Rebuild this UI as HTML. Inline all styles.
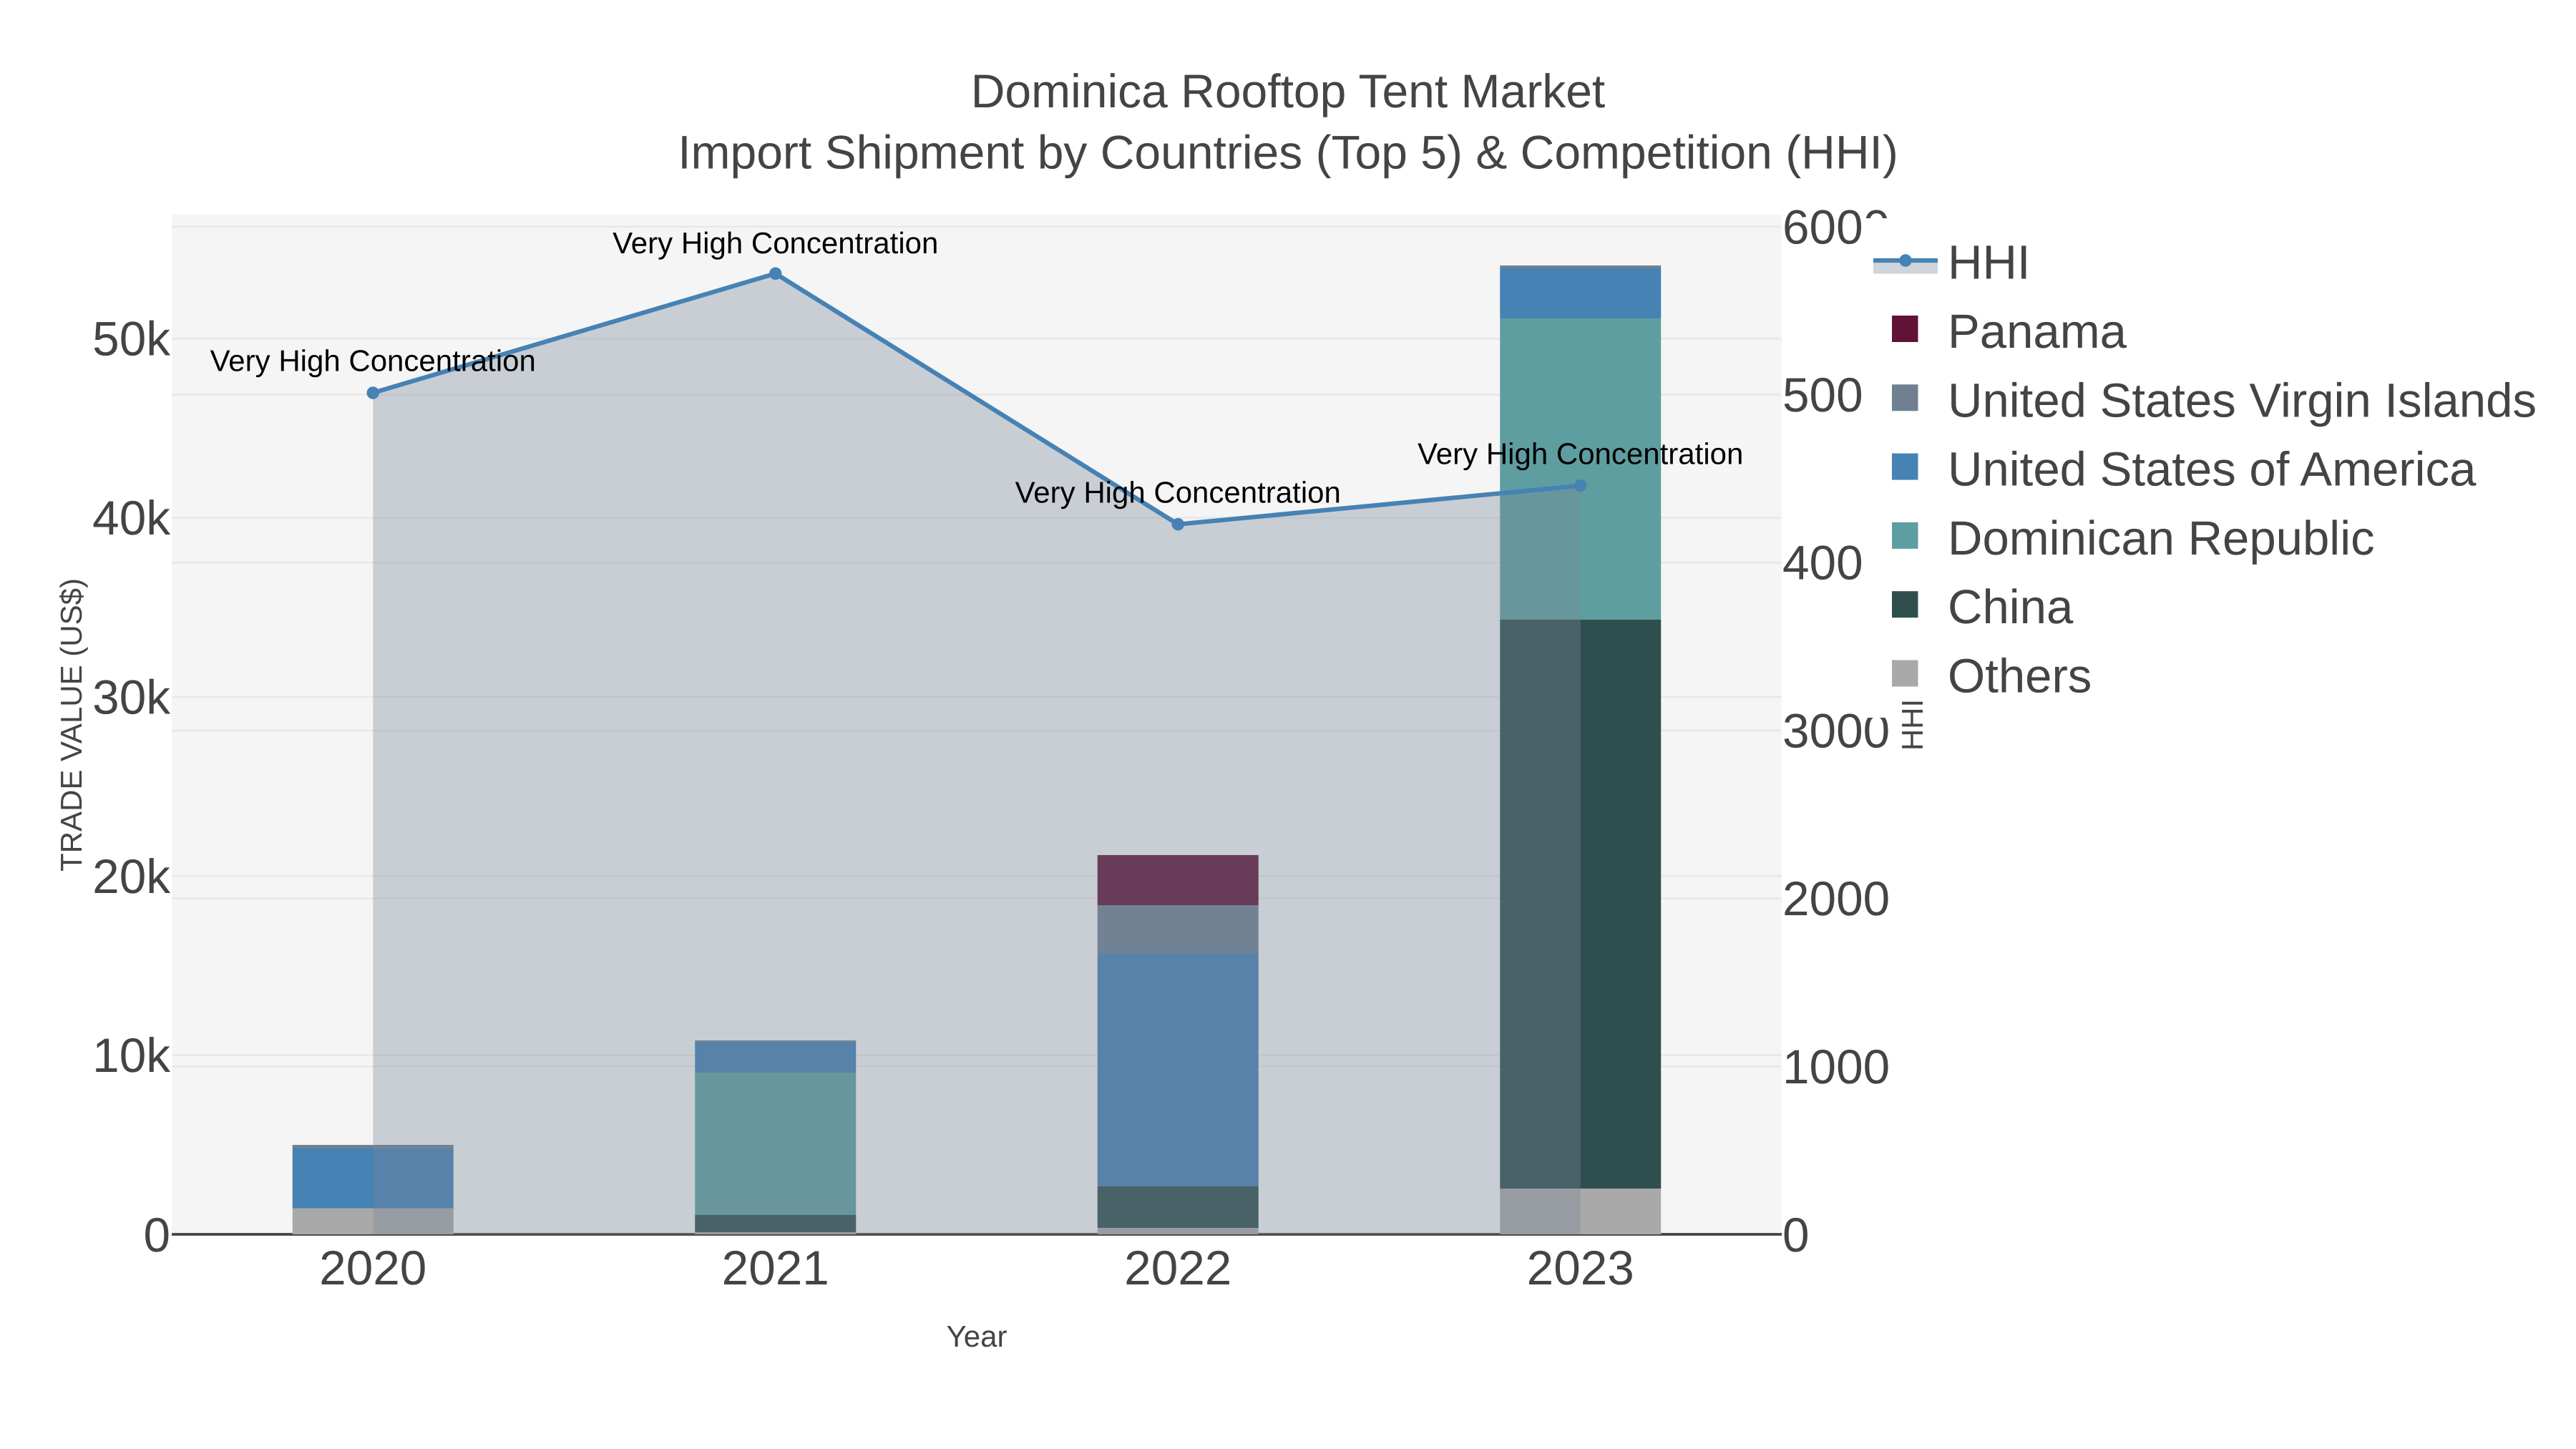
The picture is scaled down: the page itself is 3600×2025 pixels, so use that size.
<!DOCTYPE html>
<html>
<head>
<meta charset="utf-8">
<style>
html,body{margin:0;padding:0;background:#fff;width:3600px;height:2025px;overflow:hidden}
svg{display:block}
text{font-family:"Liberation Sans",Arial,sans-serif;text-rendering:geometricPrecision;fill:#444}
.t{font-size:67.5px}
.l{font-size:67.1px}
.a{font-size:42px}
.n{font-size:42px;fill:#000;text-anchor:middle}
.m{text-anchor:middle}
.e{text-anchor:end}
</style>
</head>
<body>
<svg width="3600" height="2025" viewBox="0 0 3600 2025" xmlns="http://www.w3.org/2000/svg">
<rect width="3600" height="2025" fill="#fff"/>
<rect x="240" y="300" width="2250" height="1425" fill="#f5f5f5"/>
<g stroke="#e8e8e8" stroke-width="2.5">
<path d="M240 1474.7H2490M240 1224.3H2490M240 974H2490M240 723.6H2490M240 473.2H2490"/>
<path d="M240 1490.3H2490M240 1255.6H2490M240 1021H2490M240 786.2H2490M240 551.6H2490M240 316.9H2490"/>
</g>
<path d="M240 1725H2490" stroke="#444" stroke-width="3.75"/>

<!-- 2020 -->
<rect x="408.75" y="1688.7" width="225" height="36.3" fill="#a9a9a9"/>
<rect x="408.75" y="1605" width="225" height="83.7" fill="#4682b4"/>
<rect x="408.75" y="1600" width="225" height="5" fill="#708090"/>
<!-- 2021 -->
<rect x="971.25" y="1722" width="225" height="3" fill="#a9a9a9"/>
<rect x="971.25" y="1698" width="225" height="24" fill="#2f4f4f"/>
<rect x="971.25" y="1499" width="225" height="199" fill="#5f9ea0"/>
<rect x="971.25" y="1456" width="225" height="43" fill="#4682b4"/>
<rect x="971.25" y="1454" width="225" height="2" fill="#708090"/>
<!-- 2022 -->
<rect x="1533.75" y="1716" width="225" height="9" fill="#a9a9a9"/>
<rect x="1533.75" y="1657.6" width="225" height="58.4" fill="#2f4f4f"/>
<rect x="1533.75" y="1332" width="225" height="325.6" fill="#4682b4"/>
<rect x="1533.75" y="1265" width="225" height="67" fill="#708090"/>
<rect x="1533.75" y="1195" width="225" height="70" fill="#601336"/>
<!-- 2023 -->
<rect x="2096.25" y="1661" width="225" height="64" fill="#a9a9a9"/>
<rect x="2096.25" y="866" width="225" height="795" fill="#2f4f4f"/>
<rect x="2096.25" y="445" width="225" height="421" fill="#5f9ea0"/>
<rect x="2096.25" y="375" width="225" height="70" fill="#4682b4"/>
<rect x="2096.25" y="371" width="225" height="4" fill="#708090"/>

<!-- HHI -->
<path d="M521.25 549L1083.75 382.3L1646.25 732.7L2208.75 678.7V1725H521.25Z" fill="#778899" fill-opacity="0.35"/>
<path d="M521.25 549L1083.75 382.3L1646.25 732.7L2208.75 678.7" fill="none" stroke="#4682b4" stroke-width="6.25" stroke-linejoin="round"/>
<g fill="#4682b4">
<circle cx="521.25" cy="549" r="8.75"/>
<circle cx="1083.75" cy="382.3" r="8.75"/>
<circle cx="1646.25" cy="732.7" r="8.75"/>
<circle cx="2208.75" cy="678.7" r="8.75"/>
</g>
<text class="n" x="521.25" y="518.3">Very High Concentration</text>
<text class="n" x="1083.75" y="354">Very High Concentration</text>
<text class="n" x="1646.25" y="702.5">Very High Concentration</text>
<text class="n" x="2208.75" y="648.3">Very High Concentration</text>

<!-- Left ticks -->
<g class="t">
<text class="e" x="238" y="1749">0</text>
<text class="e" x="238" y="1498.2">10k</text>
<text class="e" x="238" y="1247.8">20k</text>
<text class="e" x="238" y="997.5">30k</text>
<text class="e" x="238" y="747.1">40k</text>
<text class="e" x="238" y="496.7">50k</text>
</g>
<!-- Right ticks -->
<g class="t">
<text x="2491" y="1749">0</text>
<text x="2491" y="1514">1000</text>
<text x="2491" y="1279.2">2000</text>
<text x="2491" y="1044.5">3000</text>
<text x="2491" y="809.7">4000</text>
<text x="2491" y="575">5000</text>
<text x="2491" y="340.4">6000</text>
</g>
<!-- X ticks -->
<g class="t">
<text class="m" x="521.25" y="1795">2020</text>
<text class="m" x="1083.75" y="1795">2021</text>
<text class="m" x="1646.25" y="1795">2022</text>
<text class="m" x="2208.75" y="1795">2023</text>
</g>

<!-- Titles -->
<text class="m" x="1800" y="150" style="font-size:66px">Dominica Rooftop Tent Market</text>
<text class="m" x="1800" y="235.7" style="font-size:66px">Import Shipment by Countries (Top 5) &amp; Competition (HHI)</text>
<text class="a m" x="1365" y="1882">Year</text>
<text class="a m" transform="translate(114 1013) rotate(-90)">TRADE VALUE (US$)</text>

<!-- Legend -->
<rect x="2606" y="305" width="994" height="698" fill="#fff"/>
<rect x="2618" y="364" width="90" height="18.5" fill="#778899" fill-opacity="0.35"/>
<path d="M2618 364H2708" stroke="#4682b4" stroke-width="6.25"/>
<circle cx="2663" cy="364" r="8.75" fill="#4682b4"/>
<rect x="2644" y="441" width="36.5" height="37" fill="#601336"/>
<rect x="2644" y="537.3" width="36.5" height="37" fill="#708090"/>
<rect x="2644" y="633.6" width="36.5" height="37" fill="#4682b4"/>
<rect x="2644" y="729.9" width="36.5" height="37" fill="#5f9ea0"/>
<rect x="2644" y="826.2" width="36.5" height="37" fill="#2f4f4f"/>
<rect x="2644" y="922.5" width="36.5" height="37" fill="#a9a9a9"/>
<g class="l">
<text x="2722" y="389.5">HHI</text>
<text x="2722" y="486">Panama</text>
<text x="2722" y="582.3">United States Virgin Islands</text>
<text x="2722" y="678.6">United States of America</text>
<text x="2722" y="774.9">Dominican Republic</text>
<text x="2722" y="871.2">China</text>
<text x="2722" y="967.5">Others</text>
</g>
<text class="a m" transform="translate(2687 1013) rotate(-90)">HHI</text>
</svg>
</body>
</html>
